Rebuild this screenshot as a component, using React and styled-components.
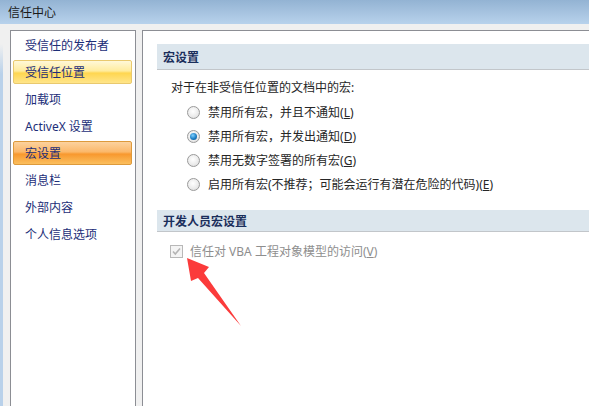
import React from "react"
import styled, { createGlobalStyle } from "styled-components"

const GlobalStyle = createGlobalStyle`
    html, body {
        margin: 0;
        padding: 0;
        background: #f0f0f0;
        overflow: hidden;
    }
    body {
        font-family: "Noto Sans", "Noto Sans CJK SC", sans-serif;
        font-size: 12px;
    }
`

const navItems = [
    { label: "受信任的发布者" },
    { label: "受信任位置", state: "hover" },
    { label: "加载项" },
    { label: "ActiveX 设置" },
    { label: "宏设置", state: "active" },
    { label: "消息栏" },
    { label: "外部内容" },
    { label: "个人信息选项" },
]

const macroOptions = [
    { text: "禁用所有宏，并且不通知", key: "L" },
    { text: "禁用所有宏，并发出通知", key: "D", checked: true },
    { text: "禁用无数字签署的所有宏", key: "G" },
    { text: "启用所有宏(不推荐；可能会运行有潜在危险的代码)", key: "E" },
]

export default function App(){
    return (
        <Window>
            <GlobalStyle />
            <TitleBar>信任中心</TitleBar>
            <Body>
                <NavPanel>
                    {navItems.map((item) => (
                        <NavItem key={item.label} $state={item.state}>{item.label}</NavItem>
                    ))}
                </NavPanel>
                <ContentPanel>
                    <SectionHeader>宏设置</SectionHeader>
                    <Intro>对于在非受信任位置的文档中的宏:</Intro>
                    <OptionList>
                        {macroOptions.map((opt) => (
                            <OptionRow key={opt.key}>
                                <Radio $checked={opt.checked} />
                                <span>{opt.text}(<u>{opt.key}</u>)</span>
                            </OptionRow>
                        ))}
                    </OptionList>
                    <SectionHeader $small>开发人员宏设置</SectionHeader>
                    <CheckRow>
                        <CheckBox>
                            <svg width="11" height="11" viewBox="0 0 11 11">
                                <path d="M2 5.5 L4.3 8 L9 2.5" fill="none" stroke="#b4b4b4" strokeWidth="1.6" />
                            </svg>
                        </CheckBox>
                        <span>信任对 VBA 工程对象模型的访问(<u>V</u>)</span>
                    </CheckRow>
                </ContentPanel>
            </Body>
            <Arrow width="589" height="406" viewBox="0 0 589 406">
                <polygon points="187,258 209,267 204,273 241,326 198,278 191,281" fill="#fb3b3b" />
            </Arrow>
        </Window>
    )
}

const Window = styled.div`
    position: relative;
    width: 589px;
    height: 406px;
    overflow: hidden;
    display: flex;
    flex-direction: column;
`

const TitleBar = styled.div`
    height: 24px;
    padding-left: 8px;
    display: flex;
    align-items: center;
    background: linear-gradient(to bottom, #93b3d3, #b8d2ec);
    color: #1a1a1a;
    font-size: 12px;
`

const Body = styled.div`
    flex: 1;
    display: flex;
    gap: 6px;
    padding: 6px 0 0 10px;
    background:
        linear-gradient(to bottom, #f0f0f0 20px, #b9d1ea 50px) no-repeat 0 0 / 3px 100%,
        #f0f0f0;
`

const NavPanel = styled.div`
    width: 124px;
    background: #ffffff;
    border: 1px solid #8c8e94;
    border-bottom: none;
    padding: 2px 3px 0 2px;
    box-sizing: border-box;
    width: 126px;
    display: flex;
    flex-direction: column;
    gap: 3px;
`

const NavItem = styled.div`
    height: 24px;
    box-sizing: border-box;
    padding-left: 11px;
    display: flex;
    align-items: center;
    color: #1c2e78;
    border-radius: 2px;
    border: 1px solid transparent;
    ${({ $state }) => $state === "hover" && `
        border-color: #e9c96e;
        background: linear-gradient(to bottom, #fff8d8 0%, #ffec9e 45%, #ffd650 55%, #ffe58a 100%);
    `}
    ${({ $state }) => $state === "active" && `
        border-color: #dd9a3c;
        background: linear-gradient(to bottom, #fcd29e 0%, #fbb86a 45%, #f8982e 55%, #fbbf5e 100%);
    `}
`

const ContentPanel = styled.div`
    flex: 1;
    background: #ffffff;
    border: 1px solid #8c8e94;
    border-right: none;
    border-bottom: none;
    padding: 13px 0 0 14px;
    display: flex;
    flex-direction: column;
`

const SectionHeader = styled.div`
    height: ${({ $small }) => ($small ? "21px" : "25px")};
    margin-top: ${({ $small }) => ($small ? "14px" : "0")};
    padding-left: 6px;
    display: flex;
    align-items: center;
    background: #dce6ed;
    border-bottom: 1px solid #c2c6ca;
    color: #1b2f5c;
    font-weight: bold;
`

const Intro = styled.div`
    margin: 10px 0 0 14px;
    height: 16px;
    line-height: 16px;
    color: #262626;
`

const OptionList = styled.div`
    display: flex;
    flex-direction: column;
    margin: 4px 0 0 30px;
`

const OptionRow = styled.div`
    height: 24px;
    display: flex;
    align-items: center;
    gap: 8px;
    color: #262626;
    u { text-decoration: underline; }
`

const Radio = styled.span`
    width: 11px;
    height: 11px;
    border-radius: 50%;
    border: 1px solid #9a9a9a;
    background: radial-gradient(circle at 45% 40%, #ffffff 0%, #ececec 55%, #d6d6d6 100%);
    position: relative;
    flex: none;
    ${({ $checked }) => $checked && `
        &::after {
            content: "";
            position: absolute;
            left: 2px;
            top: 2px;
            width: 7px;
            height: 7px;
            border-radius: 50%;
            background: radial-gradient(circle at 40% 35%, #7fd0ff 0%, #1d7ec4 55%, #0b4a82 100%);
        }
    `}
`

const CheckRow = styled.div`
    display: flex;
    align-items: center;
    gap: 7px;
    margin: 12px 0 0 13px;
    height: 14px;
    color: #8e8e8e;
`

const CheckBox = styled.span`
    width: 11px;
    height: 11px;
    border: 1px solid #b8b8b8;
    background: #f4f4f4;
    display: flex;
    align-items: center;
    justify-content: center;
    flex: none;
`

const Arrow = styled.svg`
    position: absolute;
    left: 0;
    top: 0;
    pointer-events: none;
`
